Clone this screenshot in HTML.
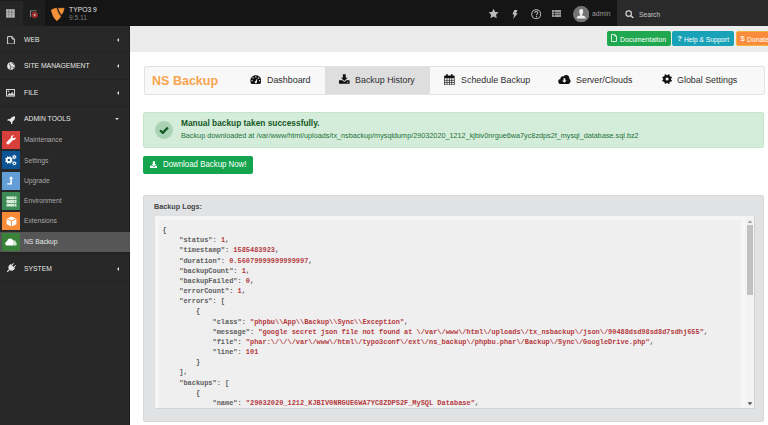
<!DOCTYPE html>
<html><head><meta charset="utf-8">
<style>
*{margin:0;padding:0;box-sizing:border-box}
html,body{width:768px;height:425px;overflow:hidden;background:#fff;font-family:"Liberation Sans",sans-serif}
.a{position:absolute}
.t{position:absolute;white-space:nowrap;line-height:1}
/* topbar */
#top{left:0;top:0;width:768px;height:26px;background:#151515}
#c1{left:0;top:0;width:22.5px;height:26px;background:#262626}
#c2{left:22.5px;top:0;width:22.5px;height:26px;background:#1e1e1e}
#search{left:617px;top:0;width:151px;height:26px;background:#2a2a2a}
/* sidebar */
#side{left:0;top:26px;width:129px;height:399px;background:#282828}
.sep{position:absolute;left:0;width:129px;height:1px;background:#222}
.gt{position:absolute;left:24.1px;font-size:7.6px;color:#e6e6e6;white-space:nowrap;line-height:1;transform:scaleX(0.893);transform-origin:0 0}
.mi{position:absolute;left:24.1px;font-size:7.2px;color:#ababab;white-space:nowrap;line-height:1;transform:scaleX(0.933);transform-origin:0 0}
.box{position:absolute;left:2px;width:18px;height:18px}
.car{position:absolute;left:116.5px;width:0;height:0;border-top:2.2px solid transparent;border-bottom:2.2px solid transparent;border-right:2.4px solid #ddd}
/* content */
#doch{left:130px;top:26px;width:638px;height:26px;background:#ececec}
.btn{position:absolute;top:31px;height:14.6px;border-radius:2px;color:#fff;font-size:6.8px;line-height:14.6px;white-space:nowrap}
#nav{left:143.5px;top:65.8px;width:621px;height:29px;background:#f8f8f8;border:1px solid #e3e3e3;border-radius:2px}
.nt{position:absolute;font-size:9.6px;color:#2e2e2e;white-space:nowrap;line-height:1;transform:scaleX(0.927);transform-origin:0 0}
#alert{left:143.3px;top:112.1px;width:620.7px;height:35.7px;background:#d4edda;border:1px solid #c3e6cb;border-radius:2px}
#dl{left:143.2px;top:155.8px;width:110px;height:18.6px;background:#13a44d;border-radius:2px}
#panel{left:143.4px;top:194.6px;width:621px;height:227.2px;background:#e1e2e4;border:1px solid #d6d7d9;border-radius:2px}
#ta{left:154.5px;top:215.8px;width:600.1px;height:193.3px;background:#f6f6f6;border:1px solid #f3f3f3;border-right-color:#d2d2d2;border-bottom-color:#d2d2d2;overflow:hidden}
#pre{left:159.2px;top:220.4px;width:582px;height:188px;background:#efefef;overflow:hidden}
pre{position:absolute;left:3.4px;top:4.7px;font-family:"Liberation Mono",monospace;font-size:6.95px;line-height:10.17px;color:#5e5e5e;font-weight:bold}
pre b{font-weight:bold;color:#b43a40}
</style></head><body>
<!-- TOPBAR -->
<div id="top" class="a"></div>
<div id="c1" class="a"></div>
<div id="c2" class="a"></div>
<div class="a" style="left:0;top:0;width:45px;height:1.1px;background:#1b1b1b"></div>
<!-- grid icon -->
<svg class="a" style="left:6.2px;top:8.8px" width="9" height="9" viewBox="0 0 9 9"><rect x="0" y="0" width="9" height="9" fill="#5a5a5a"/><g fill="#b8b8b8"><rect x="0.20" y="0.20" width="2.5" height="2.5" rx="0.5"/><rect x="3.15" y="0.20" width="2.5" height="2.5" rx="0.5"/><rect x="6.10" y="0.20" width="2.5" height="2.5" rx="0.5"/><rect x="0.20" y="3.15" width="2.5" height="2.5" rx="0.5"/><rect x="3.15" y="3.15" width="2.5" height="2.5" rx="0.5"/><rect x="6.10" y="3.15" width="2.5" height="2.5" rx="0.5"/><rect x="0.20" y="6.10" width="2.5" height="2.5" rx="0.5"/><rect x="3.15" y="6.10" width="2.5" height="2.5" rx="0.5"/><rect x="6.10" y="6.10" width="2.5" height="2.5" rx="0.5"/></g></svg>
<!-- page tree icon -->
<svg class="a" style="left:29px;top:9px" width="10" height="10" viewBox="0 0 10 10">
 <g fill="#8a8a8a"><rect x="1.1" y="1.2" width="1" height="6.8"/><rect x="2.1" y="1.4" width="5.6" height="0.8"/></g>
 <circle cx="5.7" cy="5.9" r="3.1" fill="#9c2a2a"/>
 <rect x="4.9" y="5.1" width="1.6" height="1.6" fill="#cfcfcf"/>
</svg>
<!-- typo3 logo -->
<svg class="a" style="left:48px;top:4px" width="20" height="20" viewBox="48 4 20 20">
 <g fill="#f7923a" stroke="#f7923a" stroke-width="0.5" stroke-linejoin="round">
 <path d="M51.3 9.9 Q53.9 8.5 56.4 8.1 Q57.7 13 60.8 16.5 Q59.2 19.3 56.8 20.7 Q52.4 17.2 51.3 9.9 Z"/>
 <path d="M58.4 8.2 L64.2 8.3 Q63.7 12 61.5 14.6 Q59.3 11.8 58.4 8.2 Z"/>
 </g>
</svg>
<div class="t" style="left:69.4px;top:6.2px;font-size:7.8px;color:#e5e5e5;transform:scaleX(0.867);transform-origin:0 0">TYPO3 9</div>
<div class="t" style="left:69.4px;top:14.2px;font-size:7.5px;color:#7d7d7d;transform:scaleX(0.887);transform-origin:0 0">9.5.11</div>
<!-- right icons -->
<svg class="a" style="left:488.1px;top:8.3px" width="11.2" height="11.2" viewBox="0 0 24 24"><path fill="#bbb" d="M12 1.5l3.3 6.9 7.4.9-5.4 5.1 1.4 7.4L12 18.2l-6.7 3.6 1.4-7.4-5.4-5.1 7.4-.9z"/></svg>
<svg class="a" style="left:511.6px;top:9.5px" width="6" height="9" viewBox="0 0 6 9"><path fill="#bbb" d="M2.2 0 H5.6 L3.9 3.2 H5.8 L1.2 9 L2.2 4.6 H0.4 Z"/></svg>
<svg class="a" style="left:530.8px;top:8.6px" width="10.4" height="10.4" viewBox="0 0 20 20"><circle cx="10" cy="10" r="8.6" fill="none" stroke="#bbb" stroke-width="2"/><path d="M7.2 7.6 C7.2 5.8 8.4 4.8 10.1 4.8 C11.9 4.8 13 5.8 13 7.4 C13 9.3 10.8 9.6 10.8 11.4 V12.2" fill="none" stroke="#bbb" stroke-width="2"/><circle cx="10.7" cy="14.9" r="1.3" fill="#bbb"/></svg>
<svg class="a" style="left:552.4px;top:10.2px" width="9" height="7" viewBox="0 0 9 7"><rect x="0" y="0" width="9" height="7" fill="#9a9a9a"/><g fill="#222"><rect x="2.2" y="0.6" width="0.6" height="6"/><rect x="0.6" y="2.1" width="7.8" height="0.6"/><rect x="0.6" y="4.3" width="7.8" height="0.6"/></g></svg>
<svg class="a" style="left:572.8px;top:5.8px" width="16.4" height="16.4" viewBox="0 0 20 20"><circle cx="10" cy="10" r="10" fill="#747474"/><path fill="#f0f0f0" d="M10 3.6 C8.3 3.6 7.6 5 7.6 6.8 C7.6 8.4 8.2 9.8 8.9 10.6 V11.6 C7.2 12 4.6 12.6 4.6 14 V15.4 H15.4 V14 C15.4 12.6 12.8 12 11.1 11.6 V10.6 C11.8 9.8 12.4 8.4 12.4 6.8 C12.4 5 11.7 3.6 10 3.6Z"/></svg>
<div class="t" style="left:591.9px;top:10.3px;font-size:7.2px;color:#9a9a9a;transform:scaleX(0.94);transform-origin:0 0">admin</div>
<div id="search" class="a"></div>
<svg class="a" style="left:625.2px;top:10px" width="9.2" height="8.2" viewBox="0 0 9 8"><circle cx="3.6" cy="3.5" r="2.7" fill="none" stroke="#d0d0d0" stroke-width="1.2"/><path d="M5.5 5.4 L8.2 7.8" stroke="#d0d0d0" stroke-width="1.5"/></svg>
<div class="t" style="left:638.8px;top:10.7px;font-size:7.3px;color:#c4c4c4;transform:scaleX(0.915);transform-origin:0 0">Search</div>

<!-- SIDEBAR -->
<div id="side" class="a"></div>
<div class="a" style="left:128.6px;top:26px;width:1px;height:399px;background:#1e1e1e"></div>
<div class="sep" style="top:52.3px"></div>
<div class="sep" style="top:79.2px"></div>
<div class="sep" style="top:106.2px"></div>
<div class="a" style="left:0;top:252px;width:129px;height:3.4px;background:#242424"></div>
<div class="sep" style="top:281.4px"></div>
<!-- web icon -->
<svg class="a" style="left:7px;top:35.6px" width="8" height="8.6" viewBox="0 0 8 8.6"><path d="M0.6 0.6 H5 L7.4 3 V8 H0.6 Z M5 0.6 V3 H7.4" fill="none" stroke="#d8d8d8" stroke-width="1"/></svg>
<div class="gt" style="top:35.76px">WEB</div>
<div class="car" style="top:37.5px"></div>
<!-- globe -->
<svg class="a" style="left:7.2px;top:62px" width="8" height="8" viewBox="0 0 8 8"><circle cx="4" cy="4" r="3.8" fill="#e6e6e6"/><path d="M2 1.4 C3.2 2 2.4 3 3.4 3.6 C4.4 4.2 4 5.8 3 7 M5.4 1 C5.6 2 6.6 2.2 7.4 2.8 M5.6 5 C6.4 5.2 6.8 6 6.6 6.6" stroke="#3a3a3a" stroke-width="1" fill="none"/></svg>
<div class="gt" style="top:62.26px">SITE MANAGEMENT</div>
<div class="car" style="top:64px"></div>
<!-- image -->
<svg class="a" style="left:6.3px;top:89.2px" width="9" height="7.6" viewBox="0 0 9 7.6"><rect x="0.5" y="0.5" width="8" height="6.6" fill="none" stroke="#d8d8d8" stroke-width="1"/><path d="M1.2 6.6 L3.4 3.8 L4.6 5 L6.2 3 L7.8 5 V6.6 Z" fill="#d8d8d8"/><circle cx="2.4" cy="2.2" r="0.8" fill="#d8d8d8"/></svg>
<div class="gt" style="top:88.86px">FILE</div>
<div class="car" style="top:90.6px"></div>
<!-- rocket -->
<svg class="a" style="left:6.8px;top:115.6px" width="8.6" height="8.6" viewBox="0 0 10 10"><path fill="#e8e8e8" d="M9.6 0.4 C7 0.4 5 1.6 3.6 3.6 L1 3.8 L0.2 5.2 L2.6 5.4 L4.6 7.4 L4.8 9.8 L6.2 9 L6.4 6.4 C8.4 5 9.6 3 9.6 0.4 Z"/></svg>
<div class="gt" style="top:115.46px">ADMIN TOOLS</div>
<div class="a" style="left:115px;top:118.4px;width:0;height:0;border-left:2.3px solid transparent;border-right:2.3px solid transparent;border-top:2.4px solid #ddd"></div>
<!-- module items -->
<div class="box" style="top:131px;background:#d8403c"></div>
<svg class="a" style="left:6px;top:135px" width="10" height="10" viewBox="0 0 10 10"><path fill="#fff" d="M9.4 2.2 L7.6 3.4 L6.6 2.8 L6.6 1.6 L8 0.4 C6.4 -0.2 4.6 1 5 2.8 L0.8 7 C0.2 7.6 0.4 8.6 1 9 C1.4 9.6 2.4 9.6 2.8 9.2 L7 5 C8.8 5.4 10 3.6 9.4 2.2 Z"/></svg>
<div class="mi" style="top:136.2px">Maintenance</div>
<div class="box" style="top:151.3px;background:#0c5493"></div>
<svg class="a" style="left:0;top:150px" width="22" height="20" viewBox="0 150 22 20"><g fill="#fff"><path d="M11.77 160.44 L12.69 160.90 L12.22 162.05 L11.24 161.71 L10.61 162.34 L10.95 163.32 L9.80 163.79 L9.34 162.87 L8.46 162.87 L8.00 163.79 L6.85 163.32 L7.19 162.34 L6.56 161.71 L5.58 162.05 L5.11 160.90 L6.03 160.44 L6.03 159.56 L5.11 159.10 L5.58 157.95 L6.56 158.29 L7.19 157.66 L6.85 156.68 L8.00 156.21 L8.46 157.13 L9.34 157.13 L9.80 156.21 L10.95 156.68 L10.61 157.66 L11.24 158.29 L12.22 157.95 L12.69 159.10 L11.77 159.56 Z"/><circle cx="8.9" cy="160" r="3"/></g><circle cx="8.9" cy="160" r="1.2" fill="#0c5493"/><g fill="none" stroke="#fff"><circle cx="14.3" cy="157.1" r="1.25" stroke-width="1.1"/><circle cx="14.3" cy="163.2" r="1.25" stroke-width="1.1"/><circle cx="14.3" cy="157.1" r="1.95" stroke-width="0.6" stroke-dasharray="0.7 0.9"/><circle cx="14.3" cy="163.2" r="1.95" stroke-width="0.6" stroke-dasharray="0.7 0.9"/></g></svg>
<div class="mi" style="top:156.5px">Settings</div>
<div class="box" style="top:171.6px;background:#639fd6"></div>
<svg class="a" style="left:0;top:170px" width="22" height="20" viewBox="0 170 22 20"><path fill="#fff" d="M11.1 176.2 L13.3 178.8 H11.9 V184.6 H7.3 V183.2 H10.3 V178.8 H8.9 Z"/></svg>
<div class="mi" style="top:176.8px">Upgrade</div>
<div class="box" style="top:191.9px;background:#3c8a55"></div>
<svg class="a" style="left:5.6px;top:195.6px" width="11" height="11" viewBox="0 0 11 11"><g fill="#d6ecd8"><rect x="0.5" y="0.5" width="10" height="2.8" rx="0.3"/><rect x="0.5" y="4.1" width="10" height="2.8" rx="0.3"/><rect x="0.5" y="7.7" width="10" height="2.8" rx="0.3"/></g><g fill="#3c8a55"><rect x="8" y="1.4" width="1" height="1"/><rect x="8" y="5" width="1" height="1"/><rect x="8" y="8.6" width="1" height="1"/></g></svg>
<div class="mi" style="top:197.1px">Environment</div>
<div class="box" style="top:212.2px;background:#f78b38"></div>
<svg class="a" style="left:5.6px;top:215.6px" width="11" height="11" viewBox="0 0 11 11"><path fill="#fff" d="M0.6 2.8 L5.5 0.6 L10.4 2.8 V8.2 L5.5 10.4 L0.6 8.2 Z"/><path d="M0.6 2.8 L5.5 5 L10.4 2.8 M5.5 5 V10.4" stroke="#f78b38" stroke-width="0.9" fill="none"/></svg>
<div class="mi" style="top:217.4px">Extensions</div>
<!-- active -->
<div class="a" style="left:0;top:232px;width:129.6px;height:20px;background:#565656"></div>
<div class="box" style="top:233px;background:#3a823a"></div>
<svg class="a" style="left:5px;top:238px" width="12" height="8" viewBox="0 0 12 8"><path fill="#fff" d="M2.4 7.6 C1 7.6 0.2 6.6 0.2 5.5 C0.2 4.4 1 3.6 2 3.5 C2.2 1.8 3.6 0.5 5.2 0.5 C6.6 0.5 7.6 1.3 8 2.4 V7.6 Z"/><path fill="#cfe3cd" d="M8 2.4 C8.2 2.3 8.6 2.2 8.9 2.2 C10.2 2.2 11 3.3 11 4.4 C11.6 4.7 11.8 5.3 11.8 5.9 C11.8 6.9 11 7.6 10 7.6 H8 Z"/></svg>
<div class="mi" style="top:238.2px;color:#e8e8e8">NS Backup</div>
<!-- system -->
<svg class="a" style="left:5.8px;top:263.4px" width="10" height="10" viewBox="0 0 10 10"><g transform="rotate(45 5 5)" fill="#e8e8e8"><rect x="3.1" y="-0.2" width="0.9" height="3" rx="0.4"/><rect x="6" y="-0.2" width="0.9" height="3" rx="0.4"/><path d="M1.8 2.4 H8.2 V4.2 C8.2 6 6.8 7.4 5 7.4 C3.2 7.4 1.8 6 1.8 4.2 Z"/><rect x="4.4" y="7" width="1.2" height="3.4"/></g></svg>
<div class="gt" style="top:264.86px">SYSTEM</div>
<div class="car" style="top:267.2px"></div>

<!-- CONTENT -->
<div id="doch" class="a"></div>
<div class="btn" style="left:606.7px;width:64px;background:#1fa84f"></div>
<svg class="a" style="left:611px;top:34.2px" width="6" height="8" viewBox="0 0 6 8"><path d="M0.5 0.5 H3.8 L5.5 2.2 V7.5 H0.5 Z M3.8 0.5 V2.2 H5.5" fill="none" stroke="#fff" stroke-width="0.8"/></svg>
<div class="t" style="left:619.9px;top:35.7px;font-size:7.4px;color:#fff;transform:scaleX(0.925);transform-origin:0 0">Documentaiton</div>
<div class="btn" style="left:672.4px;width:61.4px;background:#17a2b8"></div>
<div class="t" style="left:677.3px;top:35.4px;font-size:7.6px;font-weight:bold;color:#fff">?</div>
<div class="t" style="left:684px;top:35.8px;font-size:7.2px;color:#fff;transform:scaleX(0.925);transform-origin:0 0">Help &amp; Support</div>
<div class="btn" style="left:736px;width:40px;background:#fa8b3a;border:0.6px solid #f3b33c"></div>
<div class="t" style="left:740.4px;top:34.9px;font-size:7.8px;color:#fff">$</div>
<div class="t" style="left:747.2px;top:35.7px;font-size:7.4px;color:#fff;transform:scaleX(0.925);transform-origin:0 0">Donate</div>

<div id="nav" class="a"></div>
<div class="t" style="left:152.1px;top:73.6px;font-size:13.2px;font-weight:bold;color:#f9a44e;transform:scaleX(0.95);transform-origin:0 0">NS Backup</div>
<div class="a" style="left:325.2px;top:66.6px;width:104.9px;height:27.8px;background:#dedede"></div>
<!-- dashboard icon -->
<svg class="a" style="left:249.8px;top:75.4px" width="11.6" height="9.4" viewBox="0 0 12 10"><path fill="#111" d="M6 0.2 C2.8 0.2 0.2 2.8 0.2 6 C0.2 7.4 0.7 8.7 1.5 9.7 H10.5 C11.3 8.7 11.8 7.4 11.8 6 C11.8 2.8 9.2 0.2 6 0.2 Z"/><g fill="#f8f8f8"><circle cx="6" cy="2" r="0.7"/><circle cx="3" cy="3.2" r="0.7"/><circle cx="9" cy="3.2" r="0.7"/><circle cx="2" cy="6" r="0.7"/><circle cx="10" cy="6" r="0.7"/><path d="M5.2 7.6 L7.8 3 L6.9 7.9 Z"/><circle cx="6" cy="7.8" r="1.1"/></g></svg>
<div class="nt" style="left:266.8px;top:75.2px">Dashboard</div>
<!-- download icon -->
<svg class="a" style="left:339px;top:74.4px" width="10.6" height="10" viewBox="0 0 11 10"><path fill="#111" d="M4 0 H7 V3.8 H9 L5.5 7.2 L2 3.8 H4 Z M0 6.2 H3.4 L5.5 8.2 L7.6 6.2 H11 V10 H0 Z"/><rect x="8.6" y="8" width="0.9" height="0.9" fill="#e1e1e1"/></svg>
<div class="nt" style="left:355.4px;top:75.2px">Backup History</div>
<!-- calendar icon -->
<svg class="a" style="left:444.2px;top:73.5px" width="10.8" height="11.4" viewBox="0 0 10.8 11.4"><rect x="0.2" y="1.6" width="10.4" height="9.7" rx="0.6" fill="#111"/><rect x="2.3" y="0" width="1.5" height="2.8" rx="0.6" fill="#111"/><rect x="7" y="0" width="1.5" height="2.8" rx="0.6" fill="#111"/><g fill="#f4f4f4"><rect x="0.90" y="4.20" width="1.80" height="1.73"/><rect x="3.30" y="4.20" width="1.80" height="1.73"/><rect x="5.70" y="4.20" width="1.80" height="1.73"/><rect x="8.10" y="4.20" width="1.80" height="1.73"/><rect x="0.90" y="6.53" width="1.80" height="1.73"/><rect x="3.30" y="6.53" width="1.80" height="1.73"/><rect x="5.70" y="6.53" width="1.80" height="1.73"/><rect x="8.10" y="6.53" width="1.80" height="1.73"/><rect x="0.90" y="8.87" width="1.80" height="1.73"/><rect x="3.30" y="8.87" width="1.80" height="1.73"/><rect x="5.70" y="8.87" width="1.80" height="1.73"/><rect x="8.10" y="8.87" width="1.80" height="1.73"/></g></svg>
<div class="nt" style="left:460.7px;top:75.2px">Schedule Backup</div>
<!-- cloud download -->
<svg class="a" style="left:558px;top:74.6px" width="12.8" height="9.4" viewBox="0 0 13 9.6"><path fill="#111" d="M3 9.4 C1.4 9.4 0.2 8.2 0.2 6.6 C0.2 5.2 1.2 4.2 2.4 4 C2.4 4 2.4 3.9 2.4 3.8 C2.4 2.4 3.5 1.4 4.8 1.4 C5.2 1.4 5.5 1.5 5.8 1.6 C6.4 0.6 7.4 0.1 8.5 0.1 C10.2 0.1 11.6 1.5 11.6 3.2 C11.6 3.5 11.6 3.7 11.5 4 C12.3 4.4 12.8 5.2 12.8 6.2 C12.8 8 11.4 9.4 9.8 9.4 Z"/><path fill="#f8f8f8" d="M5.6 3.4 H7.4 V5.6 H8.8 L6.5 8 L4.2 5.6 H5.6 Z"/></svg>
<div class="nt" style="left:576.3px;top:75.2px">Server/Clouds</div>
<!-- gear -->
<svg class="a" style="left:661.6px;top:74.4px" width="10.2" height="10.2" viewBox="0 0 20 20"><path fill="#111" d="M17.14 10.95 L19.66 12.19 L18.37 15.28 L15.72 14.37 L14.37 15.72 L15.28 18.37 L12.19 19.66 L10.95 17.14 L9.05 17.14 L7.81 19.66 L4.72 18.37 L5.63 15.72 L4.28 14.37 L1.63 15.28 L0.34 12.19 L2.86 10.95 L2.86 9.05 L0.34 7.81 L1.63 4.72 L4.28 5.63 L5.63 4.28 L4.72 1.63 L7.81 0.34 L9.05 2.86 L10.95 2.86 L12.19 0.34 L15.28 1.63 L14.37 4.28 L15.72 5.63 L18.37 4.72 L19.66 7.81 L17.14 9.05 Z"/><circle cx="10" cy="10" r="7.6" fill="#111"/><circle cx="10" cy="10" r="3" fill="#f8f8f8"/></svg>
<div class="nt" style="left:677.4px;top:75.2px">Global Settings</div>

<div id="alert" class="a"></div>
<div class="a" style="left:155.2px;top:120.6px;width:18.2px;height:18.2px;border-radius:50%;background:#a9d3b4"></div>
<svg class="a" style="left:159.4px;top:125.6px" width="10" height="8.4" viewBox="0 0 10 8.4"><path d="M1.1 4.3 L3.8 6.9 L8.9 1.5" fill="none" stroke="#155724" stroke-width="2.3"/></svg>
<div class="t" style="left:180.6px;top:119.2px;font-size:8.9px;font-weight:bold;color:#155724;transform:scaleX(0.94);transform-origin:0 0">Manual backup taken successfully.</div>
<div class="t" style="left:180.6px;top:131.9px;font-size:7.5px;color:#24703b;transform:scaleX(0.967);transform-origin:0 0">Backup downloaded at /var/www/html/uploads/tx_nsbackup/mysqldump/29032020_1212_kjbiv0nrgue6wa7yc8zdps2f_mysql_database.sql.bz2</div>

<div id="dl" class="a"></div>
<svg class="a" style="left:149.6px;top:160.6px" width="7.8" height="7.6" viewBox="0 0 11 10"><path fill="#fff" d="M4 0 H7 V3.8 H9 L5.5 7.2 L2 3.8 H4 Z M0 6.2 H3.4 L5.5 8.2 L7.6 6.2 H11 V10 H0 Z"/></svg>
<div class="t" style="left:162.7px;top:160.3px;font-size:8.6px;color:#fff;transform:scaleX(0.915);transform-origin:0 0">Download Backup Now!</div>

<div id="panel" class="a"></div>
<div class="t" style="left:153.9px;top:202.6px;font-size:7.96px;font-weight:bold;color:#454545;transform:scaleX(0.912);transform-origin:0 0">Backup Logs:</div>
<div id="ta" class="a"></div>
<div id="pre" class="a"><pre>{
    "status": <b>1</b>,
    "timestamp": <b>1585483923</b>,
    "duration": <b>0.56079999999999997</b>,
    "backupCount": <b>1</b>,
    "backupFailed": <b>0</b>,
    "errorCount": <b>1</b>,
    "errors": [
        {
            "class": <b>"phpbu\\App\\Backup\\Sync\\Exception"</b>,
            "message": <b>"google secret json file not found at \/var\/www\/html\/uploads\/tx_nsbackup\/json\/90488dsd98sd8d7sdhj655"</b>,
            "file": <b>"phar:\/\/\/var\/www\/html\/typo3conf\/ext\/ns_backup\/phpbu.phar\/Backup\/Sync\/GoogleDrive.php"</b>,
            "line": <b>101</b>
        }
    ],
    "backups": [
        {
            "name": <b>"29032020_1212_KJBIV0NRGUE6WA7YC8ZDPS2F_MySQL Database"</b>,
</pre></div>
<!-- scrollbar -->
<div class="a" style="left:745.4px;top:216.8px;width:8.2px;height:191.3px;background:#f3f3f3"></div>
<svg class="a" style="left:746px;top:218.5px" width="8" height="5" viewBox="0 0 8 5"><path d="M1.6 3.9 L4 1.2 L6.4 3.9 Z" fill="#a0a0a0"/></svg>
<div class="a" style="left:746.6px;top:225px;width:6.2px;height:69.8px;background:#c1c1c1"></div>
<svg class="a" style="left:745.6px;top:400.6px" width="8" height="5" viewBox="0 0 8 5"><path d="M1.6 1.2 L6.4 1.2 L4 4.2 Z" fill="#505050"/></svg>
</body></html>
